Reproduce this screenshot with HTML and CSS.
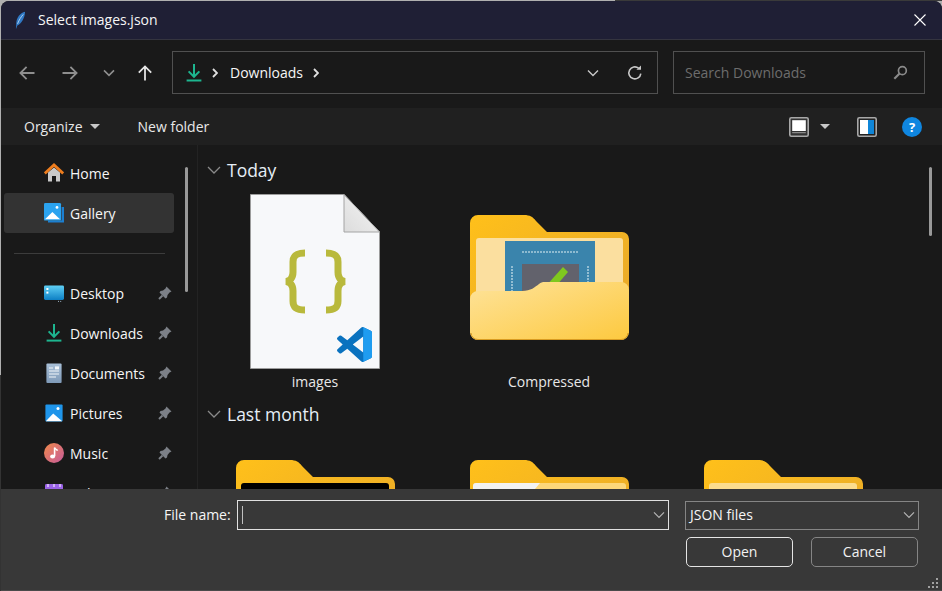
FILE: index.html
```html
<!DOCTYPE html>
<html lang="en">
<head>
    <meta charset="UTF-8">
    <meta name="viewport" content="width=device-width, initial-scale=1.0">
    <title>Select images.json</title>
    <link rel="stylesheet" href="styles.css">
</head>
<body>
    <svg class="sprite" aria-hidden="true">
        <defs>
            <linearGradient id="folderBack" x1="0" y1="0" x2="1" y2="1">
                <stop offset="0" stop-color="#ffc01a"/>
                <stop offset="1" stop-color="#e5a62c"/>
            </linearGradient>
            <linearGradient id="folderFront" x1="0" y1="0" x2="1" y2="1">
                <stop offset="0" stop-color="#fee39a"/>
                <stop offset="1" stop-color="#fdc93f"/>
            </linearGradient>
            <linearGradient id="foldShade" x1="1" y1="0" x2="0" y2="1">
                <stop offset="0" stop-color="#f6f6f6"/>
                <stop offset="1" stop-color="#dcdcdc"/>
            </linearGradient>
            <linearGradient id="desktopBlue" x1="0" y1="0" x2="0" y2="1">
                <stop offset="0" stop-color="#5fd0f5"/>
                <stop offset="1" stop-color="#0d7fc4"/>
            </linearGradient>
            <linearGradient id="musicGrad" x1="0" y1="0" x2="1" y2="1">
                <stop offset="0" stop-color="#f08a4a"/>
                <stop offset="1" stop-color="#c65a9c"/>
            </linearGradient>
            <linearGradient id="docGrad" x1="0" y1="0" x2="0" y2="1">
                <stop offset="0" stop-color="#a9c0d8"/>
                <stop offset="1" stop-color="#7f9ab8"/>
            </linearGradient>
            <symbol id="pin" viewBox="0 0 14 14">
                <path d="M8.5 .5 13.500 5.500 11.500 6.500 9.500 9 9 11.500 7.500 12.500 1.500 6.500 2.500 5 5 4.500 7.500 2.500Z" fill="#7c8087"/>
                <path d="M4.500 9.500 1 13" stroke="#7c8087" stroke-width="2"/>
            </symbol>
            <symbol id="download" viewBox="0 0 16 18">
                <path d="M8 0V12.500M2.600 7.400 8 12.800 13.400 7.400" fill="none" stroke="#1db58f" stroke-width="2"/>
                <path d="M.6 16.600H15.400" stroke="#1db58f" stroke-width="2"/>
            </symbol>
            <symbol id="folderBackShape" viewBox="0 0 159 125">
                <path d="M0 8a8 8 0 0 1 8-8h46c6 0 9 2 12 6l11 11h75a7 7 0 0 1 7 7v94H0z" fill="url(#folderBack)"/>
            </symbol>
        </defs>
    </svg>

    <div class="window">
        <header class="titlebar">
            <svg class="quill" viewBox="0 0 12 20">
                <path d="M11 .4C5.500 1.500 1.600 7 1.400 13L1 19.600 2.600 15.400C7 13.600 10.800 7 11 .4Z" fill="#2f78c4"/>
                <path d="M9 3.400C6.600 6 4.400 9.400 2.800 13.600" stroke="#b8d8f4" stroke-width="1" fill="none"/>
            </svg>
            <span class="title">Select images.json</span>
            <svg class="close" viewBox="0 0 12 12"><path d="M.5 .5 11.500 11.500M11.500 .5 .5 11.500" stroke="#fff" stroke-width="1.100"/></svg>
        </header>

        <nav class="navbar">
            <svg class="nav-icon back" viewBox="0 0 16 16"><path d="M15.500 8H1.400M7.600 1.800 1.400 8 7.600 14.200" fill="none" stroke="#8e8e8e" stroke-width="1.800"/></svg>
            <svg class="nav-icon forward" viewBox="0 0 16 16"><path d="M.5 8H14.600M8.400 1.800 14.600 8 8.400 14.200" fill="none" stroke="#8e8e8e" stroke-width="1.800"/></svg>
            <svg class="nav-chev" viewBox="0 0 12 8"><path d="M1 1.400 6 6.400 11 1.400" fill="none" stroke="#8e8e8e" stroke-width="1.600"/></svg>
            <svg class="nav-icon up" viewBox="0 0 16 16"><path d="M8 15.400V1.400M1.800 7.600 8 1.400 14.200 7.600" fill="none" stroke="#e4e4e4" stroke-width="1.800"/></svg>

            <div class="address">
                <svg class="addr-download"><use href="#download"/></svg>
                <svg class="crumb-arrow" viewBox="0 0 6 10"><path d="M1 1 5 5 1 9" fill="none" stroke="#e0e0e0" stroke-width="1.800"/></svg>
                <span class="crumb">Downloads</span>
                <svg class="crumb-arrow" viewBox="0 0 6 10"><path d="M1 1 5 5 1 9" fill="none" stroke="#e0e0e0" stroke-width="1.800"/></svg>
                <svg class="addr-chev" viewBox="0 0 12 8"><path d="M1 1.400 6 6.400 11 1.400" fill="none" stroke="#c8c8c8" stroke-width="1.400"/></svg>
                <svg class="refresh" viewBox="0 0 16 16"><path d="M13.800 8.600A6 6 0 1 1 11.600 3.200" fill="none" stroke="#c8c8c8" stroke-width="1.600"/><path d="M9.400 4.800H14V.4Z" fill="#c8c8c8"/></svg>
            </div>

            <div class="search">
                <span class="search-text">Search Downloads</span>
                <svg class="search-icon" viewBox="0 0 16 16"><circle cx="10" cy="6" r="4.200" fill="none" stroke="#8a8a8a" stroke-width="1.800"/><path d="M7 9 1.400 14.600" stroke="#8a8a8a" stroke-width="2.200"/></svg>
            </div>
        </nav>

        <div class="toolbar">
            <button class="tool-btn organize">Organize<span class="caret"></span></button>
            <button class="tool-btn">New folder</button>
            <div class="tool-right">
                <svg class="view-icon" viewBox="0 0 20 20">
                    <rect x=".8" y=".8" width="18.400" height="18.400" rx="1.500" fill="#333" stroke="#a8a8a8" stroke-width="1.600"/>
                    <rect x="3.200" y="3.200" width="13.600" height="10.800" fill="#fff"/>
                    <path d="M3.200 15.600H16.800" stroke="#8a8a8a" stroke-width="1.200"/>
                </svg>
                <span class="caret view-caret"></span>
                <svg class="pane-icon" viewBox="0 0 20 20">
                    <rect x=".8" y=".8" width="18.400" height="18.400" rx="1.500" fill="#222" stroke="#a8a8a8" stroke-width="1.600"/>
                    <rect x="3" y="3" width="8" height="14" fill="#fff"/>
                    <rect x="11" y="3" width="6" height="14" fill="#0f86d8"/>
                </svg>
                <span class="help">?</span>
            </div>
        </div>

        <div class="content">
            <aside class="sidebar">
                <div class="side-item">
                    <svg class="side-icon" viewBox="0 0 20 20">
                        <path d="M4 9.400 10 4.600 16 9.400V18.600H12V13H8V18.600H4Z" fill="#c9c9c9"/>
                        <path d="M.8 10.400 10 2 19.200 10.400" fill="none" stroke="#ee7d1e" stroke-width="2.800"/>
                    </svg>
                    <span>Home</span>
                </div>
                <div class="side-item selected">
                    <svg class="side-icon" viewBox="0 0 20 20">
                        <path d="M4 19.600H20V4H17.600V17.400H4Z" fill="#1c7fd0"/>
                        <rect x="0" y="0" width="17" height="17.600" rx="1.200" fill="#2ba3ef"/>
                        <path d="M1 16.200 8.400 9 16 16.200Z" fill="#fff"/>
                        <circle cx="13" cy="4.400" r="1.400" fill="#fff"/>
                    </svg>
                    <span>Gallery</span>
                </div>
                <div class="side-sep"></div>
                <div class="side-item">
                    <svg class="side-icon" viewBox="0 0 20 20">
                        <rect x="0" y="2.400" width="20" height="14.600" rx="1.400" fill="url(#desktopBlue)"/>
                        <rect x="2.400" y="5" width="2" height="2" fill="#fff"/>
                        <rect x="2.400" y="8.600" width="2" height="2" fill="#fff"/>
                        <path d="M14 18.400H15M16.200 18.400H17.200" stroke="#9fb4c4" stroke-width="1"/>
                    </svg>
                    <span>Desktop</span>
                    <svg class="pin"><use href="#pin"/></svg>
                </div>
                <div class="side-item">
                    <svg class="side-icon" viewBox="0 0 20 20"><use href="#download" x="2" y="1" width="16" height="18"/></svg>
                    <span>Downloads</span>
                    <svg class="pin"><use href="#pin"/></svg>
                </div>
                <div class="side-item">
                    <svg class="side-icon" viewBox="0 0 20 20">
                        <rect x="2.400" y=".4" width="15.200" height="19.600" rx="1" fill="url(#docGrad)"/>
                        <path d="M5 5H9M5 8H15M5 11H15M5 14H12" stroke="#f2f6fa" stroke-width="1.200"/>
                        <rect x="11" y="3.400" width="4" height="3" fill="#f2f6fa"/>
                    </svg>
                    <span>Documents</span>
                    <svg class="pin"><use href="#pin"/></svg>
                </div>
                <div class="side-item">
                    <svg class="side-icon" viewBox="0 0 20 20">
                        <rect x="1.400" y="1.400" width="17.200" height="17.200" rx="1" fill="#1f95ea"/>
                        <path d="M1.800 18.200 9.200 10.600 18.200 18.200Z" fill="#fff"/>
                        <circle cx="14" cy="5.600" r="1.500" fill="#fff"/>
                    </svg>
                    <span>Pictures</span>
                    <svg class="pin"><use href="#pin"/></svg>
                </div>
                <div class="side-item">
                    <svg class="side-icon" viewBox="0 0 20 20">
                        <circle cx="10" cy="10" r="10" fill="url(#musicGrad)"/>
                        <path d="M10.600 4.600V13" stroke="#fff" stroke-width="1.600"/>
                        <path d="M10.600 4.600C11 6.400 13 6.600 13.600 7.600" fill="none" stroke="#fff" stroke-width="1.400"/>
                        <ellipse cx="8.600" cy="13.600" rx="2.500" ry="2" fill="#fff"/>
                    </svg>
                    <span>Music</span>
                    <svg class="pin"><use href="#pin"/></svg>
                </div>
                <div class="side-item">
                    <svg class="side-icon" viewBox="0 0 20 20">
                        <rect x="1" y="1" width="18" height="18" rx="1.400" fill="#9a63e6"/>
                        <path d="M4 1V4M10 1V4M16 1V4" stroke="#e4d4fa" stroke-width="1.400"/>
                    </svg>
                    <span>Videos</span>
                    <svg class="pin"><use href="#pin"/></svg>
                </div>
                <div class="side-scroll"></div>
            </aside>

            <main class="files">
                <div class="group-head">
                    <svg class="group-chev" viewBox="0 0 14 8"><path d="M1 1 7 7 13 1" fill="none" stroke="#8a8a8a" stroke-width="1.300"/></svg>
                    <span>Today</span>
                </div>
                <div class="tiles">
                    <div class="tile">
                        <svg class="file-icon" viewBox="0 0 130 175">
                            <path d="M.5 .5H94L129.500 38V174.500H.5Z" fill="#f7f8fa" stroke="#9c9c9c"/>
                            <path d="M94 .5V38H129.500Z" fill="url(#foldShade)" stroke="#a4a4a4"/>
                            <path d="M55 59c-8 0-12 2-12 9v10c0 6-3 9-7 9.500 4 .5 7 3.500 7 9.500v10c0 7 4 9 12 9" fill="none" stroke="#b9b93c" stroke-width="7"/>
                            <path d="M76 59c8 0 12 2 12 9v10c0 6 3 9 7 9.500-4 .5-7 3.500-7 9.500v10c0 7-4 9-12 9" fill="none" stroke="#b9b93c" stroke-width="7"/>
                            <g transform="translate(87 133) scale(.35)">
                                <path fill-rule="evenodd" d="M96.500 10.800 75.900 .9a6.200 6.200 0 0 0-7.100 1.200L29.400 38 12.200 25a4.200 4.200 0 0 0-5.300.2L1.400 30.300a4.200 4.200 0 0 0 0 6.200L16.300 50 1.400 63.500a4.200 4.200 0 0 0 0 6.200l5.500 5a4.200 4.200 0 0 0 5.300.2L29.400 62l39.400 35.900a6.200 6.200 0 0 0 7.100 1.200l20.600-9.900a6.200 6.200 0 0 0 3.500-5.600V16.400a6.200 6.200 0 0 0-3.500-5.600ZM75 27.300 45.100 50 75 72.700Z" fill="#0a72bf"/>
                                <path d="M75 .6 96.500 10.800a6.200 6.200 0 0 1 3.500 5.600V83.600a6.200 6.200 0 0 1-3.500 5.600L75 99.400Z" fill="#1f9cf0"/>
                            </g>
                        </svg>
                        <span class="tile-name">images</span>
                    </div>
                    <div class="tile">
                        <svg class="folder folder-raised" viewBox="0 0 159 125">
                            <use href="#folderBackShape"/>
                            <rect x="6" y="23" width="147" height="70" rx="3" fill="#fbdf9f"/>
                            <rect x="35" y="26" width="90" height="60" fill="#3a84ac"/>
                            <path d="M52 37H108M42 51V76M118 51V76" stroke="#a9ccdc" stroke-width="1.600" stroke-dasharray="2 1"/>
                            <rect x="52" y="49" width="57" height="34" fill="#62626c"/>
                            <path d="M70 78 75 72 93 52 98 57 80 78Z" fill="#7fc81e"/>
                            <path d="M0 84a8 8 0 0 1 8-8h44c9 0 13-4 17-7 2-1.500 3-2 6-2h76a8 8 0 0 1 8 8v42a8 8 0 0 1-8 8H8a8 8 0 0 1-8-8z" fill="url(#folderFront)"/>
                            <path d="M1 118a7 7 0 0 0 7 6.500H151a7 7 0 0 0 7-6.500" fill="none" stroke="#d99c22"/>
                        </svg>
                        <span class="tile-name">Compressed</span>
                    </div>
                </div>
                <div class="group-head">
                    <svg class="group-chev" viewBox="0 0 14 8"><path d="M1 1 7 7 13 1" fill="none" stroke="#8a8a8a" stroke-width="1.300"/></svg>
                    <span>Last month</span>
                </div>
                <div class="tiles month">
                    <div class="tile">
                        <svg class="folder" viewBox="0 0 159 125">
                            <use href="#folderBackShape"/>
                            <rect x="5" y="23" width="148" height="70" rx="3" fill="#000"/>
                        </svg>
                    </div>
                    <div class="tile">
                        <svg class="folder" viewBox="0 0 159 125">
                            <use href="#folderBackShape"/>
                            <rect x="3" y="23" width="153" height="70" rx="3" fill="#fcd77a"/>
                            <path d="M3 26a3 3 0 0 1 3-3H70L60 35H3Z" fill="#f2f2f2"/>
                        </svg>
                    </div>
                    <div class="tile">
                        <svg class="folder" viewBox="0 0 159 125">
                            <use href="#folderBackShape"/>
                            <rect x="5" y="23" width="148" height="70" rx="3" fill="#fbdc8e"/>
                        </svg>
                    </div>
                </div>
                <div class="main-scroll"></div>
            </main>
        </div>

        <footer class="bottom">
            <div class="name-row">
                <label class="name-label">File name:</label>
                <div class="name-input">
                    <span class="cursor"></span>
                    <svg class="drop-chev" viewBox="0 0 12 8"><path d="M1 1.400 6 6.400 11 1.400" fill="none" stroke="#b4b4b4" stroke-width="1.200"/></svg>
                </div>
                <div class="type-select">
                    <span class="type-text">JSON files</span>
                    <svg class="drop-chev" viewBox="0 0 12 8"><path d="M1 1.400 6 6.400 11 1.400" fill="none" stroke="#b4b4b4" stroke-width="1.200"/></svg>
                </div>
            </div>
            <div class="button-row">
                <button class="dlg-btn primary">Open</button>
                <button class="dlg-btn">Cancel</button>
            </div>
            <svg class="grip" viewBox="0 0 10 10">
                <path d="M8 0h2v2H8zM4 4h2v2H4zM8 4h2v2H8zM0 8h2v2H0zM4 8h2v2H4zM8 8h2v2H8z" fill="#a0a0a0"/>
            </svg>
        </footer>
    </div>
</body>
</html>
```

FILE: styles.css
```css
* {
    box-sizing: border-box;
}
body {
    margin: 0;
    height: 591px;
    padding: 1px 0 0 1px;
    overflow: hidden;
    background:
        linear-gradient(to right, #b0b0b0 615px, #3a3a3a 615px) top / 100% 1px no-repeat,
        linear-gradient(#b0b0b0 375px, #333 375px) left / 1px 100% no-repeat,
        #b0b0b0;
    font-family: "Open Sans", "Noto Sans", sans-serif;
    font-size: 14px;
    color: #f6f6f6;
}
.sprite {
    display: block;
    width: 0;
    height: 0;
}
.window {
    display: flex;
    flex-direction: column;
    height: 590px;
    overflow: hidden;
    border-radius: 8px 8px 0 0;
    background-color: #191919;
}

/* title bar */
.titlebar {
    display: flex;
    align-items: center;
    flex: none;
    height: 39px;
    padding-left: 14px;
    background-color: #1f1f35;
    border-bottom: 1px solid #34343f;
}
.quill {
    width: 11px;
    height: 19px;
}
.title {
    margin-left: 12px;
    padding-bottom: 2px;
}
.close {
    width: 12px;
    height: 12px;
    margin-left: auto;
    margin-right: 16px;
}

/* nav */
.navbar {
    display: flex;
    align-items: center;
    flex: none;
    height: 68px;
    padding: 0 0 3px 18px;
    background-color: #191919;
}
.nav-icon {
    width: 16px;
    height: 16px;
}
.forward {
    margin-left: 27px;
}
.nav-chev {
    width: 12px;
    height: 8px;
    margin-left: 25px;
}
.up {
    margin-left: 22px;
}
.address {
    display: flex;
    align-items: center;
    width: 486px;
    height: 43px;
    margin-left: 19px;
    padding-left: 13px;
    border: 1px solid #505050;
    background-color: #191919;
}
.addr-download {
    width: 16px;
    height: 18px;
}
.crumb-arrow {
    width: 6px;
    height: 10px;
    margin-left: 10px;
}
.crumb {
    margin-left: 12px;
}
.addr-chev {
    width: 12px;
    height: 8px;
    margin-left: auto;
}
.refresh {
    width: 16px;
    height: 16px;
    margin-left: 28px;
    margin-right: 14px;
}
.search {
    display: flex;
    align-items: center;
    justify-content: space-between;
    width: 252px;
    height: 43px;
    margin-left: 15px;
    padding: 0 16px 0 11px;
    border: 1px solid #505050;
}
.search-text {
    color: #6d6d6d;
}
.search-icon {
    width: 15px;
    height: 15px;
}

/* toolbar */
.toolbar {
    display: flex;
    align-items: center;
    flex: none;
    height: 37px;
    padding-left: 23px;
    background-color: #202020;
}
.tool-btn {
    display: flex;
    align-items: center;
    padding: 0;
    border: none;
    background: none;
    font: inherit;
    color: #e8e8e8;
}
.organize {
    margin-right: 38px;
}
.caret {
    width: 0;
    height: 0;
    margin-left: 7px;
    border-left: 5.5px solid transparent;
    border-right: 5.5px solid transparent;
    border-top: 5.5px solid #c8c8c8;
}
.tool-right {
    display: flex;
    align-items: center;
    margin-left: auto;
    margin-right: 20px;
}
.view-icon,
.pane-icon {
    width: 20px;
    height: 20px;
}
.view-caret {
    margin-left: 11px;
}
.pane-icon {
    margin-left: 27px;
}
.help {
    display: flex;
    align-items: center;
    justify-content: center;
    width: 20px;
    height: 20px;
    margin-left: 25px;
    border-radius: 50%;
    background-color: #0f86e0;
    font-size: 13px;
    font-weight: 700;
    color: #fff;
}

/* body of the dialog */
.content {
    display: flex;
    flex: 1;
    min-height: 0;
}
.sidebar {
    position: relative;
    flex: none;
    width: 197px;
    padding: 8px 0 0 3px;
    overflow: hidden;
    border-right: 1px solid #232323;
}
.side-item {
    display: flex;
    align-items: center;
    width: 170px;
    height: 40px;
    padding: 0 2px 0 40px;
    border-radius: 3px;
}
.side-item.selected {
    background-color: #333;
}
.side-icon {
    flex: none;
    width: 20px;
    height: 20px;
    margin-right: 6px;
}
.pin {
    width: 14px;
    height: 14px;
    margin-left: auto;
}
.side-sep {
    height: 1px;
    width: 151px;
    margin: 20px 0 19px 10px;
    background-color: #3c3c3c;
}
.side-scroll {
    position: absolute;
    left: 184px;
    top: 22px;
    width: 3px;
    height: 125px;
    border-radius: 2px;
    background-color: #999;
}
.files {
    position: relative;
    flex: 1;
    padding-top: 10px;
    overflow: hidden;
}
.group-head {
    display: flex;
    align-items: center;
    height: 30px;
    padding-left: 9px;
    font-size: 17.5px;
    color: #e6eef6;
}
.group-chev {
    width: 14px;
    height: 8px;
    margin-right: 6px;
}
.tiles {
    display: grid;
    grid-template-columns: repeat(3, 234px);
    height: 214px;
    padding-top: 9px;
}
.tiles.month {
    padding-top: 31px;
}
.tile {
    display: flex;
    flex-direction: column;
    align-items: center;
}
.file-icon {
    width: 130px;
    height: 175px;
    flex: none;
}
.folder {
    width: 159px;
    height: 125px;
    flex: none;
}
.folder-raised {
    margin: 21px 0 29px;
}
.tile-name {
    margin-top: 3px;
    color: #e8e8e8;
}
.main-scroll {
    position: absolute;
    left: 731px;
    top: 22px;
    width: 3px;
    height: 69px;
    border-radius: 2px;
    background-color: #999;
}

/* bottom panel */
.bottom {
    position: relative;
    flex: none;
    height: 102px;
    background-color: #383838;
    border-bottom: 1px solid #4a4a4a;
}
.name-row {
    display: flex;
    align-items: center;
    height: 30px;
    margin-top: 11px;
    padding-left: 163px;
}
.name-label {
    width: 73px;
    padding-bottom: 2px;
}
.name-input {
    display: flex;
    align-items: center;
    justify-content: space-between;
    width: 432px;
    height: 30px;
    padding: 0 3px 0 4px;
    border: 1.500px solid #e0e0e0;
}
.cursor {
    width: 1px;
    height: 18px;
    background-color: #c0c0c0;
}
.drop-chev {
    width: 12px;
    height: 8px;
}
.type-select {
    display: flex;
    align-items: center;
    justify-content: space-between;
    width: 234px;
    height: 29px;
    margin-left: 16px;
    padding: 0 3px 0 4px;
    border: 1px solid #858585;
}
.type-text {
    padding-bottom: 2px;
}
.button-row {
    display: flex;
    gap: 18px;
    margin-top: 7px;
    padding-left: 685px;
}
.dlg-btn {
    width: 107px;
    height: 30px;
    padding: 0 0 2px;
    border: 1.500px solid #858585;
    border-radius: 5px;
    background: none;
    font: inherit;
    color: #f2f2f2;
}
.dlg-btn.primary {
    border-color: #e4e4e4;
}
.grip {
    position: absolute;
    right: 4px;
    bottom: 2px;
    width: 10px;
    height: 10px;
}
```
